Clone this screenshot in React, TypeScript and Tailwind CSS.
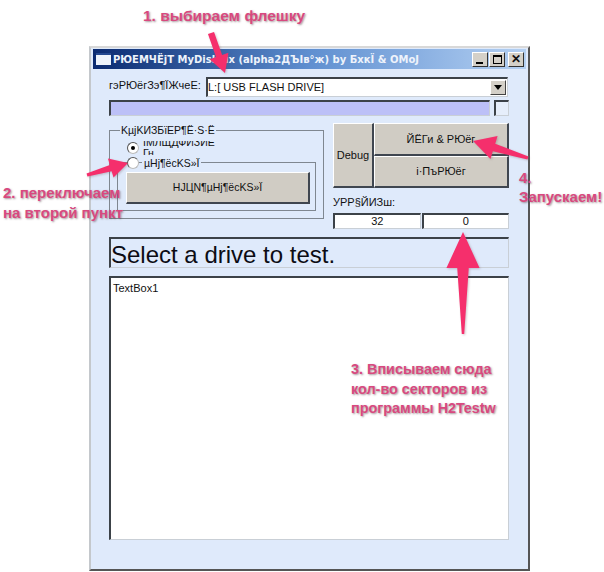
const sunken = "border-t-2 border-l-2 border-t-[#3c4248] border-l-[#3c4248] border-b border-r border-b-[#c9cfd6] border-r-[#c9cfd6]";
const raised = "bg-[#d0ccc4] border border-t-white border-l-white border-b-[#3f4650] border-r-[#3f4650] border-b-2 border-r-2 text-[#111] flex items-center justify-center";
const note = "absolute font-['Liberation_Sans',sans-serif] font-bold text-[#d8497f] whitespace-nowrap [text-shadow:1px_1px_2px_rgba(90,60,70,0.55)]";

function CaptionButton({ children }: { children: React.ReactNode }) {
  return (
    <div className="w-[16px] h-[15px] bg-[#d4d0c8] border border-t-white border-l-white border-b-[#333] border-r-[#333] flex items-center justify-center">
      {children}
    </div>
  );
}

function Radio({ checked }: { checked?: boolean }) {
  return (
    <div className="w-[12px] h-[12px] rounded-full bg-white border border-[#555] border-b-[#bbb] border-r-[#bbb] flex items-center justify-center">
      {checked && <div className="w-[4px] h-[4px] rounded-full bg-black" />}
    </div>
  );
}

function Arrow({ x1, y1, x2, y2, head = 24, width = 0.55, shaft = 0.18, tail = 1.5 }: { x1: number; y1: number; x2: number; y2: number; head?: number; width?: number; shaft?: number; tail?: number }) {
  const dx = x2 - x1;
  const dy = y2 - y1;
  const len = Math.hypot(dx, dy);
  const ux = dx / len;
  const uy = dy / len;
  const nx = -uy;
  const ny = ux;
  const bx = x2 - ux * head;
  const by = y2 - uy * head;
  const hw = head * width;
  const sw = head * shaft;
  const pts = [
    [x1 + nx * tail * 0.4, y1 + ny * tail * 0.4],
    [bx + nx * sw, by + ny * sw],
    [bx + nx * hw, by + ny * hw],
    [x2, y2],
    [bx - nx * hw, by - ny * hw],
    [bx - nx * sw, by - ny * sw],
    [x1 - nx * tail * 0.4, y1 - ny * tail * 0.4],
  ].map((p) => p.join(",")).join(" ");
  return <polygon points={pts} fill="#f52f6c" />;
}

export default function App() {
  return (
    <div className="relative w-[604px] h-[572px] bg-white overflow-hidden font-['Liberation_Sans',sans-serif] text-[11px] text-[#111]">
      <div className="absolute left-[89px] top-[46px] w-[441px] h-[525px] bg-[#dfeafb] border-t-2 border-l-2 border-t-[#d8d8d8] border-l-[#c4c8cc] border-r-2 border-b-2 border-r-[#555] border-b-[#555] px-[2px] pt-[1px] flex flex-col">
        <div className="h-[20px] shrink-0 flex items-center pl-[3px] pr-[2px] bg-gradient-to-r from-[#0b2a70] via-[#5f8fd0] to-[#b4d0f2]">
          <div className="w-[15px] h-[12px] bg-[#eef3fb] border-t-2 border-[#24488f] shrink-0" />
          <span className="ml-[2px] font-['DejaVu_Sans',sans-serif] font-bold text-[10px] text-[#eef3fb] whitespace-nowrap">РЮЕМЧЁjТ MyDiskFix (alpha2ДЪІв°ж) by БхкЇ &amp; ОМоЈ</span>
          <div className="ml-auto flex gap-[1px] shrink-0">
            <CaptionButton><div className="w-[7px] h-[2px] bg-black mt-[7px] mr-[2px]" /></CaptionButton>
            <CaptionButton><div className="w-[9px] h-[9px] border border-t-2 border-black" /></CaptionButton>
            <div className="ml-[2px]">
              <CaptionButton><span className="text-[12px] font-bold leading-none">✕</span></CaptionButton>
            </div>
          </div>
        </div>

        <div className="flex flex-col pl-[16px] pr-[17px] pt-[8px]">
          <div className="flex items-center h-[20px] pr-[1px]">
            <span className="w-[97px] text-[11px] whitespace-nowrap -mt-[4px]">гэРЮёгЗэ¶ЇЖчеЕ:</span>
            <div className={`flex-1 h-[20px] bg-white flex items-center text-[11px] ${sunken}`}>
              <span className="flex-1">L:[ USB FLASH DRIVE]</span>
              <div className="w-[16px] h-[15px] mr-[1px] bg-[#d4d0c8] border border-t-white border-l-white border-b-[#444] border-r-[#444] flex items-center justify-center">
                <div className="w-0 h-0 border-x-[4px] border-x-transparent border-t-[5px] border-t-black" />
              </div>
            </div>
          </div>

          <div className="flex items-stretch gap-[4px] mt-[3px] h-[16px]">
            <div className={`flex-1 bg-[#bcc0f7] ${sunken}`} />
            <div className={`w-[15px] bg-[#e6eefb] ${sunken}`} />
          </div>

          <div className="flex mt-[7px] gap-[9px]">
            <div className="w-[215px] shrink-0 pt-[7px]">
              <div className="relative h-[89px] border border-[#7f8790]">
                <span className="absolute left-[10px] -top-[7px] px-[1px] bg-[#dfeafb] text-[10.5px] leading-[13px] whitespace-nowrap">KµjKИЗБїЕР¶Ё·S·Ё</span>
                <div className="absolute left-[17px] top-[11px]"><Radio checked /></div>
                <div className="absolute left-[33px] top-[10px] w-[80px] h-[14px] overflow-hidden">
                  <div className="-mt-[4px] text-[10.5px] leading-[11px]">ІМЛЩДФИЗИЕ Гн</div>
                </div>
                <div className="absolute left-[7px] top-[31px] w-[199px] h-[49px] border border-[#7f8790]" />
                <div className="absolute left-[17px] top-[26px]"><Radio /></div>
                <span className="absolute left-[32px] top-[26px] px-[2px] bg-[#dfeafb] text-[10.5px] leading-[13px] whitespace-nowrap">µHj¶ёсKS»Ї</span>
                <div className={`absolute left-[16px] top-[41px] w-[184px] h-[32px] text-[10.5px] ${raised}`}>НJЦN¶µHj¶ёсKS»Ї</div>
              </div>
            </div>

            <div className="flex-1 flex flex-col">
              <div className="flex h-[65px]">
                <div className={`w-[41px] text-[11px] ${raised}`}>Debug</div>
                <div className="flex-1 flex flex-col">
                  <div className={`flex-1 ${raised}`}>ЙЁГи &amp; РЮёг</div>
                  <div className={`flex-1 ${raised}`}>і·ПъРЮёг</div>
                </div>
              </div>
              <span className="mt-[7px] text-[11px] leading-[14px]">УРР§ЙИЗш:</span>
              <div className="flex gap-[1px] mt-[4px] h-[16px]">
                <div className={`flex-1 bg-white flex items-center justify-center ${sunken}`}>32</div>
                <div className={`flex-1 bg-white flex items-center justify-center ${sunken}`}>0</div>
              </div>
            </div>
          </div>

          <div className={`mt-[8px] h-[31px] pt-[4px] bg-[#dfeafb] flex items-center text-[24px] leading-none text-[#0c0c14] ${sunken}`}>
            Select a drive to test.
          </div>

          <div className={`mt-[8px] h-[264px] bg-white pl-[2px] pt-[2px] text-[11px] ${sunken}`}>TextBox1</div>
        </div>
      </div>

      <svg className="absolute inset-0 pointer-events-none" width="604" height="572">
        <g style={{ filter: "drop-shadow(1px 1px 1px rgba(120,90,100,0.35))" }}>
          <Arrow x1={211} y1={33} x2={225} y2={73} head={18} tail={8} />
          <Arrow x1={528} y1={158} x2={473} y2={141} head={22} tail={4} />
          <Arrow x1={87} y1={175} x2={128} y2={163} head={18} tail={4} />
          <Arrow x1={463} y1={334} x2={463} y2={232} head={36} width={0.46} shaft={0.16} tail={3} />
        </g>
      </svg>

      <span className={`${note} left-[143px] top-[7px] text-[15.5px] leading-[18px]`}>1. выбираем флешку</span>
      <div className={`${note} left-[3px] top-[183px] text-[15px] leading-[20px]`}>
        2. переключаем<br />на второй пункт
      </div>
      <div className={`${note} left-[351px] top-[360px] text-[14.4px] leading-[19.5px]`}>
        3. Вписываем сюда<br />кол-во секторов из<br />программы H2Testw
      </div>
      <div className={`${note} left-[519px] top-[168px] text-[15px] leading-[19px]`}>
        4.<br />Запускаем!
      </div>
    </div>
  );
}
